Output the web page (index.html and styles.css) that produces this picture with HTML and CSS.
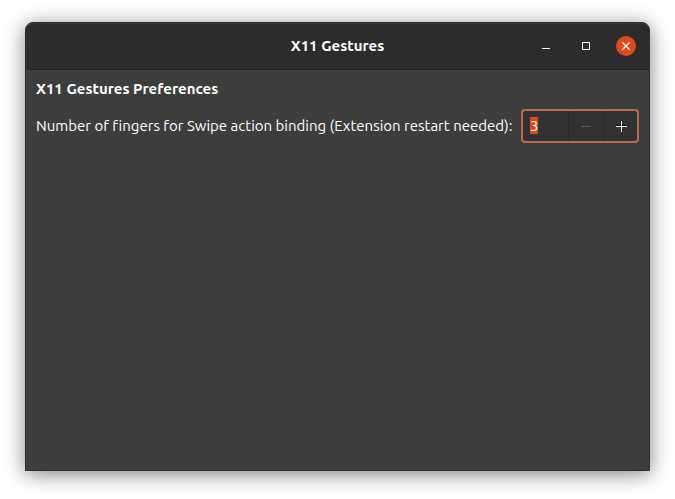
FILE: index.html
```
<!DOCTYPE html>
<html lang="en">
<head>
<meta charset="utf-8">
<meta name="viewport" content="width=device-width, initial-scale=1">
<title>X11 Gestures</title>
<link rel="stylesheet" href="styles.css">
</head>
<body>
<div class="window">
  <header class="titlebar">
    <h1 class="title">X11 Gestures</h1>
    <div class="controls">
      <button class="control" type="button" aria-label="Minimize">
        <svg viewBox="0 0 20 20" aria-hidden="true"><path d="M6 12h8v1H6z" fill="#fff"/></svg>
      </button>
      <button class="control" type="button" aria-label="Maximize">
        <svg viewBox="0 0 20 20" aria-hidden="true"><path d="M6.500 6.500h7v7h-7z" fill="none" stroke="#fff"/></svg>
      </button>
      <button class="control close" type="button" aria-label="Close">
        <svg viewBox="0 0 20 20" aria-hidden="true"><path d="M6.300 6.300l7.400 7.400M13.700 6.300l-7.400 7.400" fill="none" stroke="#fff" stroke-width="1.300"/></svg>
      </button>
    </div>
  </header>
  <main class="content">
    <h2 class="heading">X11 Gestures Preferences</h2>
    <div class="row">
      <label for="fingers">Number of fingers for Swipe action binding (Extension restart needed):</label>
      <div class="spin">
        <input id="fingers" type="number" value="3" min="3" max="4">
        <button class="step" id="less" type="button" aria-label="Decrease" disabled>
          <svg width="12" height="12" viewBox="0 0 12 12" aria-hidden="true"><path d="M1 6h10v1H1z" fill="#5a5a5a"/></svg>
        </button>
        <button class="step last" id="more" type="button" aria-label="Increase">
          <svg width="13" height="12" viewBox="0 0 13 12" aria-hidden="true"><path d="M2 5h11v1H2z" fill="#000"/><path d="M2 6h11v1H2zM7 1h1v11H7z" fill="#fff"/></svg>
        </button>
      </div>
    </div>
  </main>
</div>
<script src="main.js"></script>
</body>
</html>
```
FILE: styles.css
```
* {
  box-sizing: border-box;
}

body {
  margin: 0;
  min-height: 100vh;
  padding: 22px 25px 28px;
  display: flex;
  background: #fff;
  color: #fff;
  font: 15px/20px Ubuntu, "Noto Sans", sans-serif;
  font-variant-ligatures: none;
}

.window {
  flex: 1;
  min-width: 0;
  display: flex;
  flex-direction: column;
  background: #3d3d3d;
  border: 1px solid #2e2e2e;
  border-radius: 8px 8px 0 0;
  box-shadow: 0 3px 20px rgba(0, 0, 0, 0.5);
}

.titlebar {
  display: grid;
  grid-template-columns: 1fr auto 1fr;
  align-items: center;
  height: 47px;
  padding: 0 13px 1px;
  background: #2c2c2c;
  border-top: 1px solid #383838;
  border-bottom: 1px solid #232323;
  border-radius: 7px 7px 0 0;
}

.title,
.heading {
  margin: 0;
  font-size: 15px;
  font-weight: 700;
}

.title {
  grid-column: 2;
}

.controls {
  display: flex;
  justify-content: flex-end;
  gap: 20px;
}

.control {
  width: 20px;
  height: 20px;
  padding: 0;
  border: 0;
  border-radius: 50%;
  background: none;
}

.close {
  background: #e2491a;
}

.control svg,
.step svg {
  display: block;
}

.content {
  padding: 9px 10px;
}

.row {
  display: flex;
  align-items: center;
  justify-content: space-between;
  gap: 8px;
  margin-top: 10px;
}

.row label {
  white-space: nowrap;
}

.spin {
  display: flex;
  flex: none;
  width: 118px;
  height: 34px;
  border: 2px solid #bb6b50;
  border-radius: 4px;
  background: #323232;
}

.spin input {
  flex: 1;
  min-width: 0;
  padding: 0 0 1px 7px;
  border: 0;
  outline: 0;
  background: none;
  color: #fff;
  font: inherit;
  line-height: 17px;
  appearance: textfield;
}

.spin input::-webkit-inner-spin-button,
.spin input::-webkit-outer-spin-button {
  appearance: none;
  margin: 0;
}

.spin input::selection {
  background: #e2491a;
  color: #fff;
}

.step {
  width: 35px;
  padding: 0;
  display: grid;
  place-items: center;
  border: 0;
  border-left: 1px solid #292929;
  background: none;
}

.step.last {
  width: 34px;
}
```
FILE: main.js
```
const field = document.getElementById("fingers");
const less = document.getElementById("less");
const more = document.getElementById("more");

function step(amount) {
  if (amount > 0) field.stepUp();
  else field.stepDown();
  less.disabled = field.value <= field.min;
  more.disabled = field.value >= field.max;
}

less.addEventListener("click", () => step(-1));
more.addEventListener("click", () => step(1));
field.focus();
field.select();
```
